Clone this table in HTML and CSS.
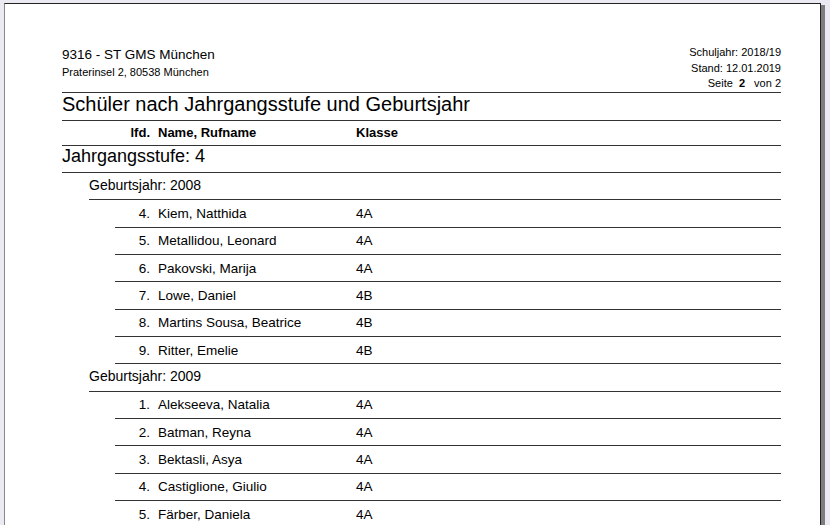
FILE: index.html
```html
<!DOCTYPE html>
<html lang="de">
<head>
<meta charset="utf-8">
<title>Schüler nach Jahrgangsstufe und Geburtsjahr</title>
<link rel="stylesheet" href="styles.css">
</head>
<body>
<div class="page">
  <header class="head">
    <div class="school">
      <div class="school-name">9316 - ST GMS München</div>
      <div class="school-addr">Praterinsel 2, 80538 München</div>
    </div>
    <div class="meta">
      <div>Schuljahr: 2018/19</div>
      <div>Stand: 12.01.2019</div>
      <div>Seite <b class="pg">2</b> von 2</div>
    </div>
  </header>
  <div class="row title">Schüler nach Jahrgangsstufe und Geburtsjahr</div>
  <div class="row cols">
    <span class="num">lfd.</span><span class="name">Name, Rufname</span><span class="kl">Klasse</span>
  </div>
  <div class="row level">Jahrgangsstufe: 4</div>
  <div class="row year">Geburtsjahr: 2008</div>
  <div class="row student"><span class="num">4.</span><span class="name">Kiem, Natthida</span><span class="kl">4A</span></div>
  <div class="row student"><span class="num">5.</span><span class="name">Metallidou, Leonard</span><span class="kl">4A</span></div>
  <div class="row student"><span class="num">6.</span><span class="name">Pakovski, Marija</span><span class="kl">4A</span></div>
  <div class="row student"><span class="num">7.</span><span class="name">Lowe, Daniel</span><span class="kl">4B</span></div>
  <div class="row student"><span class="num">8.</span><span class="name">Martins Sousa, Beatrice</span><span class="kl">4B</span></div>
  <div class="row student"><span class="num">9.</span><span class="name">Ritter, Emelie</span><span class="kl">4B</span></div>
  <div class="row year">Geburtsjahr: 2009</div>
  <div class="row student"><span class="num">1.</span><span class="name">Alekseeva, Natalia</span><span class="kl">4A</span></div>
  <div class="row student"><span class="num">2.</span><span class="name">Batman, Reyna</span><span class="kl">4A</span></div>
  <div class="row student"><span class="num">3.</span><span class="name">Bektasli, Asya</span><span class="kl">4A</span></div>
  <div class="row student"><span class="num">4.</span><span class="name">Castiglione, Giulio</span><span class="kl">4A</span></div>
  <div class="row student"><span class="num">5.</span><span class="name">Färber, Daniela</span><span class="kl">4A</span></div>
</div>
</body>
</html>
```

FILE: styles.css
```css
html, body {
  margin: 0;
  padding: 0;
}
body {
  background: #ebeaf3;
  font-family: "Liberation Sans", Arial, sans-serif;
  color: #000;
  height: 525px;
  overflow: hidden;
}
.page {
  box-sizing: border-box;
  width: 817px;
  height: 523px;
  overflow: hidden;
  margin: 3px 0 0 4px;
  background: #fff;
  border-left: 1px solid #8a8a8a;
  border-top: 1px solid #222;
  border-right: 1px solid #222;
  box-shadow: 4px 2px 0 #7d7d7d;
  padding: 0 39px 0 57px;
}
.head {
  box-sizing: border-box;
  height: 89px;
  padding-top: 41px;
  border-bottom: 1px solid #333;
  display: flex;
  justify-content: space-between;
  align-items: flex-start;
}
.school-name {
  font-size: 13.5px;
  line-height: 16px;
  margin-top: 2px;
}
.school-addr {
  font-size: 11px;
  line-height: 14px;
  margin-top: 2px;
}
.meta {
  font-size: 11px;
  line-height: 15.5px;
  text-align: right;
}
.pg {
  margin: 0 6px 0 3px;
}
.row {
  box-sizing: border-box;
  height: 27.35px;
  border-bottom: 1px solid #333;
  display: flex;
  align-items: center;
  white-space: nowrap;
}
.title {
  height: 27.5px;
  font-size: 20px;
  padding-bottom: 3px;
}
.cols {
  height: 25px;
  font-size: 13px;
  font-weight: bold;
  padding-bottom: 1px;
}
.cols .num {
  width: 88px;
}
.num {
  text-align: right;
  flex: none;
}
.name {
  width: 198px;
  margin-left: 8px;
  flex: none;
}
.level {
  font-size: 18px;
  padding-bottom: 4px;
}
.year {
  margin-left: 27px;
  font-size: 14px;
  padding-bottom: 2px;
}
.student {
  margin-left: 53px;
  font-size: 13.5px;
}
.student .num {
  width: 35px;
}
```
